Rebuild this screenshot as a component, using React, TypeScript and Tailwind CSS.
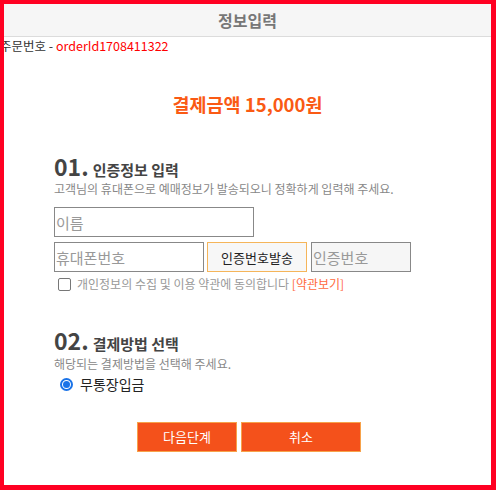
export default function App() {
  return (
    <div
      className="w-[496px] h-[490px] bg-white border-l-4 border-t-4 border-r-[5px] border-b-[5px] border-[#ff0022] overflow-hidden"
      style={{ fontFamily: '"Noto Sans CJK KR", "Liberation Sans", sans-serif' }}
    >
      <div className="h-[33px] bg-[#f6f6f6] border-b border-[#dcdcdc] flex items-center justify-center">
        <h1 className="text-[16px] font-bold text-[#777]">정보입력</h1>
      </div>
      <div className="-ml-[4px] mt-[1px] text-[12.5px] leading-[16px] text-[#333]">
        주문번호 - <span className="text-[#ff0000]">orderId1708411322</span>
      </div>

      <div className="mt-[37px] text-center text-[18.5px] font-bold text-[#fa5a14]">결제금액 15,000원</div>

      <div className="pl-[50px] mt-[34px]">
        <div className="flex items-baseline gap-[4px] text-[#444]">
          <span className="text-[23px] font-bold leading-[26px]">01.</span>
          <span className="text-[15px] font-bold">인증정보 입력</span>
        </div>
        <p className="text-[12px] leading-[16px] text-[#888]">고객님의 휴대폰으로 예매정보가 발송되오니 정확하게 입력해 주세요.</p>

        <input
          placeholder="이름"
          className="mt-[10px] block w-[200px] h-[30px] border border-[#888] px-[1px] text-[15px] placeholder-[#999] outline-none"
        />
        <div className="mt-[5px] flex gap-[3px]">
          <input
            placeholder="휴대폰번호"
            className="w-[150px] h-[30px] border border-[#888] px-[1px] text-[15px] placeholder-[#999] outline-none"
          />
          <button className="w-[100px] h-[30px] border border-[#f5b55a] bg-[#f7f7f7] text-[13px] text-[#222]">인증번호발송</button>
          <input
            placeholder="인증번호"
            disabled
            className="ml-[1px] w-[100px] h-[30px] border border-[#888] bg-[#f6f6f6] px-[1px] text-[15px] placeholder-[#999] outline-none"
          />
        </div>
        <label className="mt-[3px] ml-[4px] flex items-center gap-[6px] text-[12px] text-[#999]">
          <span className="w-[13px] h-[13px] rounded-[2px] border border-[#777] bg-white" />
          <span>
            개인정보의 수집 및 이용 약관에 동의합니다 <span className="text-[#ff6a3d]">[약관보기]</span>
          </span>
        </label>

        <div className="mt-[34px] flex items-baseline gap-[4px] text-[#444]">
          <span className="text-[23px] font-bold leading-[26px]">02.</span>
          <span className="text-[15px] font-bold">결제방법 선택</span>
        </div>
        <p className="text-[12px] leading-[16px] text-[#888]">해당되는 결제방법을 선택해 주세요.</p>
        <label className="mt-[2px] ml-[6px] flex items-center gap-[7px] text-[14px] text-[#222]">
          <span className="w-[13px] h-[13px] rounded-full border-2 border-[#1a73e8] flex items-center justify-center">
            <span className="w-[7px] h-[7px] rounded-full bg-[#1a73e8]" />
          </span>
          무통장입금
        </label>
      </div>

      <div className="mt-[27px] ml-[133px] flex gap-[4px]">
        <button className="w-[100px] h-[30px] border border-[#f7a24a] bg-[#f4511b] text-[13px] text-white">다음단계</button>
        <button className="w-[120px] h-[30px] border border-[#f7a24a] bg-[#f4511b] text-[13px] text-white">취소</button>
      </div>
    </div>
  );
}
